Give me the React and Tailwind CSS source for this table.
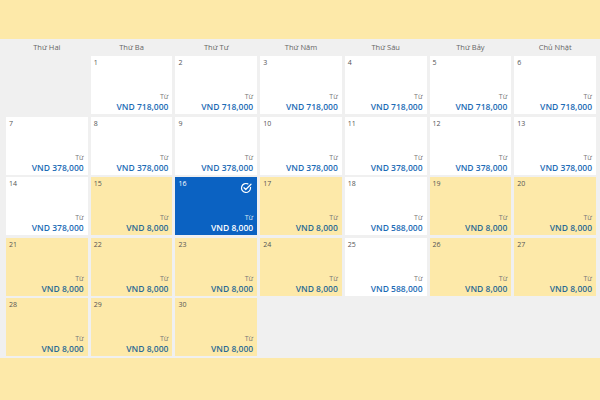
import React from "react";

const days = ["Thứ Hai", "Thứ Ba", "Thứ Tư", "Thứ Năm", "Thứ Sáu", "Thứ Bảy", "Chủ Nhật"];

const prices = {};
for (let d = 1; d <= 6; d++) prices[d] = "718,000";
for (let d = 7; d <= 14; d++) prices[d] = "378,000";
for (let d = 15; d <= 30; d++) prices[d] = "8,000";
prices[18] = "588,000";
prices[25] = "588,000";

const yellow = new Set([15, 17, 19, 20, 21, 22, 23, 24, 26, 27, 28, 29, 30]);

function Check() {
  return (
    <svg width="12" height="12" viewBox="0 0 24 24" fill="none" stroke="white" strokeWidth="2.4" strokeLinecap="round" strokeLinejoin="round">
      <path d="M21 10.5V12a9 9 0 1 1-5.3-8.2" />
      <path d="M8 11.5l3.5 3.5L22 4.5" />
    </svg>
  );
}

function Cell({ d }) {
  if (!d) return <div />;
  const sel = d === 16;
  const yel = yellow.has(d);
  const bg = sel ? "bg-[#0b62c2]" : yel ? "bg-[#fde9a9]" : "bg-white";
  const numC = sel ? "text-white" : "text-[#555]";
  const tuC = sel ? "text-[#dbe8f7]" : "text-[#777]";
  const priceC = sel ? "text-white" : yel ? "text-[#2b6a93]" : "text-[#1c6bb5]";
  return (
    <div className={`${bg} relative flex flex-col justify-between pl-[3px] pr-[4px] pt-[2px] pb-[2px]`}>
      <div className={`${numC} text-[7px] leading-[10px]`}>{d}</div>
      {sel && (
        <div className="absolute right-[5px] top-[5px]">
          <Check />
        </div>
      )}
      <div className="flex flex-col items-end">
        <div className={`${tuC} text-[7px] leading-[9px]`}>Từ</div>
        <div className={`${priceC} text-[8.5px] leading-[11px] font-semibold`}>VND {prices[d]}</div>
      </div>
    </div>
  );
}

export default function App() {
  const cells = [null];
  for (let d = 1; d <= 30; d++) cells.push(d);
  while (cells.length < 35) cells.push(null);
  return (
    <div className="w-[600px] h-[400px] flex flex-col bg-[#fde9a9]" style={{ fontFamily: '"Open Sans", "Noto Sans", sans-serif' }}>
      <div className="h-[39px] shrink-0" />
      <div className="bg-[#f0f0f0] h-[319px] pl-[6px] pr-[4px]">
        <div className="grid grid-cols-7 gap-x-[3px] h-[17px] items-center">
          {days.map((d) => (
            <div key={d} className="text-center text-[7.5px] text-[#666] leading-none">{d}</div>
          ))}
        </div>
        <div className="grid grid-cols-7 gap-x-[3px] gap-y-[2.5px] grid-rows-[repeat(5,58px)]">
          {cells.map((d, i) => (
            <Cell key={i} d={d} />
          ))}
        </div>
      </div>
    </div>
  );
}
